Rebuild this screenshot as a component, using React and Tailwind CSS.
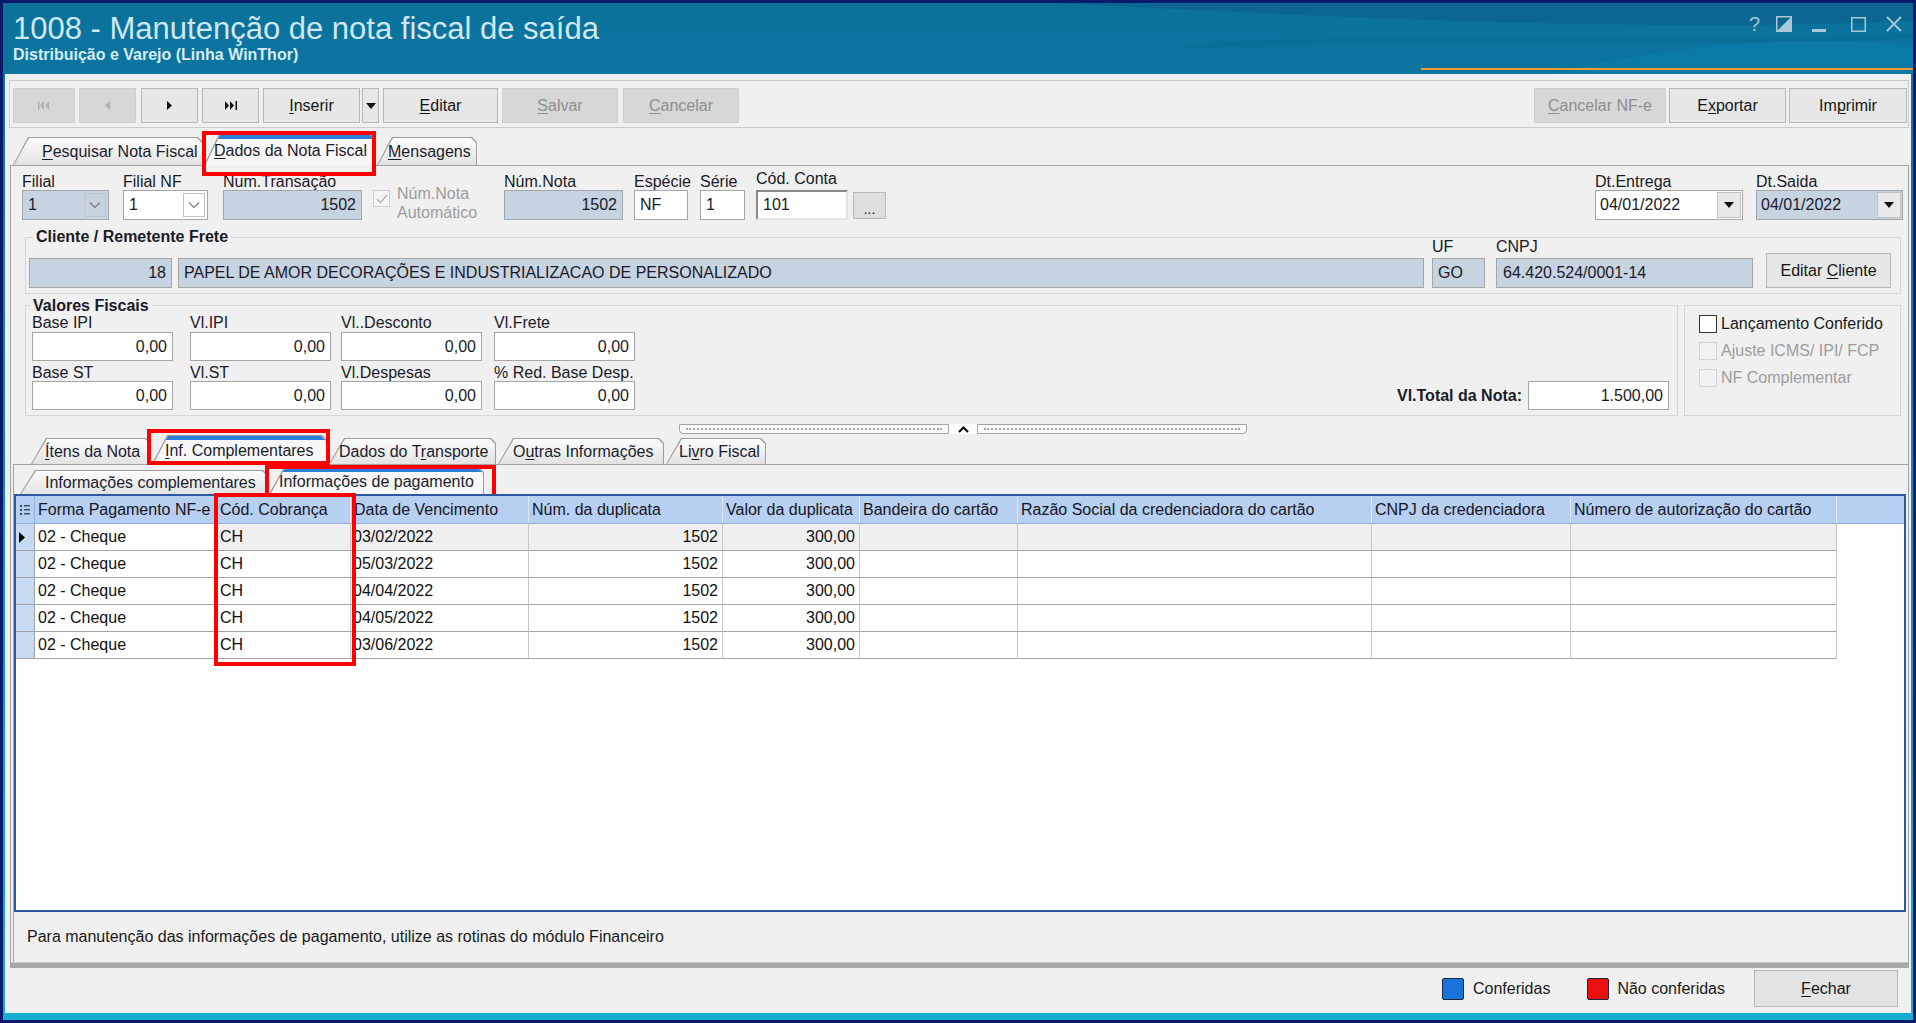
import React from "react";

const U = ({ children }) => (
  <span className="underline decoration-[1px] underline-offset-[2px]">{children}</span>
);

function Btn({ className = "", disabled, children }) {
  return (
    <div
      className={`flex h-[35px] shrink-0 items-center justify-center border text-[16px] ${
        disabled
          ? "border-[#cfcfcf] bg-[#d7d7d7] text-[#8e8e8e]"
          : "border-[#b7b7b7] bg-[#e7e7e7] text-[#161616]"
      } ${className}`}
    >
      <span className="whitespace-pre">{children}</span>
    </div>
  );
}

const CLIP = "[clip-path:polygon(0_100%,15px_0,calc(100%_-_5px)_0,100%_5px,100%_100%)]";

function Tab({ className = "", active, children, textClass = "", ring }) {
  return (
    <div className={`relative shrink-0 ${active ? "h-full" : "h-[calc(100%_-_3px)]"} ${className}`}>
      <div className={`absolute inset-0 bg-[#9d9d9d] ${CLIP}`} />
      <div
        className={`absolute left-[1px] right-[1px] top-[1px] overflow-hidden ${CLIP} ${
          active ? "bottom-[-1px] bg-[#f7f7f7]" : "bottom-0 bg-gradient-to-b from-[#fdfdfd] to-[#e2e2e2]"
        }`}
      >
        {active && <div className="h-[4px] bg-[#2b7fd8]" />}
      </div>
      <div className={`relative flex h-full items-center whitespace-nowrap pt-[2px] text-[16px] text-[#1c1c2e] ${textClass}`}>
        <span className="whitespace-pre">{children}</span>
      </div>
      {ring}
    </div>
  );
}

function Inp({ className = "", ro, right, sunken, children }) {
  return (
    <div
      className={`flex h-full items-center overflow-hidden whitespace-nowrap px-[5px] text-[16px] ${
        sunken ? "border-[2px] border-[#8a8a8a] border-b-[#e3e3e3] border-r-[#e3e3e3]" : "border border-[#a6a6a6]"
      } ${ro ? "bg-[#c6d3e0]" : "bg-white"} ${right ? "justify-end" : ""} ${className}`}
    >
      {children}
    </div>
  );
}

function Field({ label, className = "", lbl = "h-[16px] leading-[16px]", ih = "h-[30px]", children }) {
  return (
    <div className={`flex shrink-0 flex-col ${className}`}>
      <div className={`whitespace-nowrap text-[16px] ${lbl}`}>{label}</div>
      <div className={ih}>{children}</div>
    </div>
  );
}

const Chevron = () => (
  <svg width="12" height="8" viewBox="0 0 12 8">
    <path d="M1 1.5 L6 6.5 L11 1.5" fill="none" stroke="#7b7b7b" strokeWidth="1.2" />
  </svg>
);

const DownTri = () => (
  <svg width="10" height="6" viewBox="0 0 10 6">
    <path d="M0 0 H10 L5 6 Z" fill="#111" />
  </svg>
);

function Combo({ ro, children }) {
  return (
    <div className={`flex h-full border border-[#a6a6a6] ${ro ? "bg-[#c6d3e0]" : "bg-white"}`}>
      <div className="flex flex-1 items-center pl-[5px]">{children}</div>
      <div className="m-[2px] flex w-[22px] items-center justify-center border border-[#c4c4c4]">
        <Chevron />
      </div>
    </div>
  );
}

function DateBox({ ro, children }) {
  return (
    <div className={`flex h-full border border-[#a6a6a6] ${ro ? "bg-[#c6d3e0]" : "bg-white"}`}>
      <div className="flex flex-1 items-center pl-[4px]">{children}</div>
      <div className="my-[1px] mr-[1px] flex w-[24px] items-center justify-center border border-[#c2c2c2] bg-[#e9e9e9]">
        <DownTri />
      </div>
    </div>
  );
}

function CheckItem({ disabled, children }) {
  return (
    <div className="flex h-[27px] items-center">
      <div
        className={`h-[18px] w-[18px] shrink-0 border ${
          disabled ? "border-[#d2d2d2] bg-[#f2f2f2]" : "border-[#333] bg-white"
        }`}
      />
      <span className={`ml-[4px] whitespace-nowrap text-[16px] ${disabled ? "text-[#9c9c9c]" : "text-[#1a1a1a]"}`}>
        {children}
      </span>
    </div>
  );
}

function VField({ label, className = "", lbl }) {
  return (
    <Field label={label} className={`w-[141px] ${className}`} lbl={lbl} ih="h-[29px]">
      <Inp right>0,00</Inp>
    </Field>
  );
}

const COLS = [
  { w: "w-[182px]", h: "Forma Pagamento NF-e" },
  { w: "w-[134px]", h: "Cód. Cobrança" },
  { w: "w-[178px]", h: "Data de Vencimento" },
  { w: "w-[194px]", h: "Núm. da duplicata" },
  { w: "w-[137px]", h: "Valor da duplicata" },
  { w: "w-[158px]", h: "Bandeira do cartão" },
  { w: "w-[354px]", h: "Razão Social da credenciadora do cartão" },
  { w: "w-[199px]", h: "CNPJ da credenciadora" },
  { w: "w-[266px]", h: "Número de autorização do cartão" },
];

const ROWS = [
  ["02 - Cheque", "CH", "03/02/2022", "1502", "300,00"],
  ["02 - Cheque", "CH", "05/03/2022", "1502", "300,00"],
  ["02 - Cheque", "CH", "04/04/2022", "1502", "300,00"],
  ["02 - Cheque", "CH", "04/05/2022", "1502", "300,00"],
  ["02 - Cheque", "CH", "03/06/2022", "1502", "300,00"],
];

function Grid() {
  return (
    <div className="relative mr-[2px] h-[418px] shrink-0 border-2 border-[#2b58a0] bg-white">
      <div className="flex h-[28px] border-b border-[#93b2db] bg-[#b7cff0]">
        <div className="flex w-[19px] shrink-0 items-center justify-center border-r border-[#93b2db]">
          <svg width="10" height="12" viewBox="0 0 10 12">
            <rect x="0" y="1" width="2" height="2" fill="#3a4a66" />
            <rect x="0" y="5" width="2" height="2" fill="#3a4a66" />
            <rect x="0" y="9" width="2" height="2" fill="#3a4a66" />
            <rect x="4" y="1" width="6" height="1.4" fill="#3a4a66" />
            <rect x="4" y="5" width="6" height="1.4" fill="#3a4a66" />
            <rect x="4" y="9" width="6" height="1.4" fill="#3a4a66" />
          </svg>
        </div>
        {COLS.map((c, i) => (
          <div
            key={i}
            className={`${c.w} shrink-0 overflow-hidden whitespace-nowrap border-r border-[#dce7f6] pl-[3px] text-[16px] leading-[27px] text-[#15151f]`}
          >
            {c.h}
          </div>
        ))}
      </div>
      {ROWS.map((r, i) => (
        <div key={i} className="flex h-[27px]">
          <div className="flex w-[19px] shrink-0 items-center border-b border-r border-[#a3a3a3] bg-[#c8daf1] pl-[3px]">
            {i === 0 && (
              <svg width="6" height="11" viewBox="0 0 6 11">
                <path d="M0 0 L6 5.5 L0 11 Z" fill="#000" />
              </svg>
            )}
          </div>
          {COLS.map((c, j) => {
            const v = r[j] || "";
            const right = j === 3 || j === 4;
            const bg = i === 0 && j > 0 ? "bg-[#efefef]" : "bg-white";
            return (
              <div
                key={j}
                className={`${c.w} flex shrink-0 items-center overflow-hidden whitespace-nowrap border-b border-r border-b-[#a3a3a3] border-r-[#c6c6c6] text-[16px] text-[#111] ${bg} ${
                  right ? "justify-end pr-[4px]" : j === 2 ? "pl-[2px]" : "pl-[3px]"
                }`}
              >
                {v}
              </div>
            );
          })}
        </div>
      ))}
      <div className="absolute left-[198px] top-[-3px] h-[173px] w-[142px] border-[4px] border-[#ff0000]" />
    </div>
  );
}

function TitleBar() {
  return (
    <div className="relative flex h-[71px] shrink-0 items-start overflow-hidden">
      <svg className="absolute inset-0 h-full w-full" viewBox="0 0 1910 71" preserveAspectRatio="none">
        <path d="M1050 0 C1300 12 1600 30 1910 18 L1910 0 Z" fill="#0a5c84" opacity="0.45" />
        <path d="M1550 71 C1650 45 1780 30 1910 42 L1910 71 Z" fill="#0b80ad" opacity="0.5" />
        <path d="M1180 40 C1400 30 1650 38 1910 30 L1910 36 C1650 44 1400 38 1180 46 Z" fill="#0a6890" opacity="0.3" />
      </svg>
      <div className="relative pl-[10px] pt-[9px]">
        <div className="whitespace-nowrap text-[31px] leading-[34px] text-[#cfe7f1]">
          1008 - Manutenção de nota fiscal de saída
        </div>
        <div className="whitespace-nowrap text-[16px] font-bold leading-[18px] text-[#d5ecf4]">
          Distribuição e Varejo (Linha WinThor)
        </div>
      </div>
      <div className="relative ml-auto mr-[11px] mt-[11px] flex h-[20px] items-center text-[#a9c7d7]">
        <div className="w-[12px] text-[20px] leading-[20px]">?</div>
        <svg className="ml-[15px]" width="16" height="16" viewBox="0 0 16 16">
          <rect x="0.75" y="0.75" width="14.5" height="14.5" fill="none" stroke="#a9c7d7" strokeWidth="1.5" />
          <path d="M1 15 L15 1 L15 15 Z" fill="#a9c7d7" />
        </svg>
        <svg className="ml-[20px]" width="14" height="16" viewBox="0 0 14 16">
          <rect x="0" y="13" width="14" height="3" fill="#a9c7d7" />
        </svg>
        <svg className="ml-[25px]" width="15" height="15" viewBox="0 0 15 15">
          <rect x="0.75" y="0.75" width="13.5" height="13.5" fill="none" stroke="#a9c7d7" strokeWidth="1.5" />
        </svg>
        <svg className="ml-[20px]" width="16" height="16" viewBox="0 0 16 16">
          <path d="M1 1 L15 15 M15 1 L1 15" stroke="#a9c7d7" strokeWidth="1.8" />
        </svg>
      </div>
      <div className="absolute bottom-[4px] left-[1418px] right-0 h-[2px] bg-[#f29a2e]" />
    </div>
  );
}

function Toolbar() {
  return (
    <div className="ml-[4px] mr-[2px] mt-[6px] flex h-[48px] shrink-0 border border-[#cbcbcb] pl-[3px] pr-[1px] pt-[7px]">
      <Btn disabled className="w-[62px]">
        <svg width="12" height="9" viewBox="0 0 12 9">
          <rect x="0" y="0" width="1.5" height="9" fill="#b2b2b2" />
          <path d="M6 0 L2 4.5 L6 9 Z M11 0 L7 4.5 L11 9 Z" fill="#b2b2b2" />
        </svg>
      </Btn>
      <Btn disabled className="ml-[4px] w-[57px]">
        <svg width="5" height="9" viewBox="0 0 5 9">
          <path d="M5 0 L0 4.5 L5 9 Z" fill="#b2b2b2" />
        </svg>
      </Btn>
      <Btn className="ml-[5px] w-[57px]">
        <svg width="5" height="9" viewBox="0 0 5 9">
          <path d="M0 0 L5 4.5 L0 9 Z" fill="#111" />
        </svg>
      </Btn>
      <Btn className="ml-[4px] w-[57px]">
        <svg width="12" height="9" viewBox="0 0 12 9">
          <path d="M0 0 L4 4.5 L0 9 Z M5 0 L9 4.5 L5 9 Z" fill="#111" />
          <rect x="10.5" y="0" width="1.5" height="9" fill="#111" />
        </svg>
      </Btn>
      <Btn className="ml-[4px] w-[97px]">
        <U>I</U>nserir
      </Btn>
      <Btn className="ml-[2px] w-[17px]">
        <DownTri />
      </Btn>
      <Btn className="ml-[4px] w-[115px]">
        <U>E</U>ditar
      </Btn>
      <Btn disabled className="ml-[4px] w-[116px]">
        <U>S</U>alvar
      </Btn>
      <Btn disabled className="ml-[5px] w-[116px]">
        <U>C</U>ancelar
      </Btn>
      <div className="flex-1" />
      <Btn disabled className="w-[132px]">
        <U>C</U>ancelar NF-e
      </Btn>
      <Btn className="ml-[3px] w-[117px]">
        E<U>x</U>portar
      </Btn>
      <Btn className="ml-[3px] w-[118px]">
        Im<U>p</U>rimir
      </Btn>
    </div>
  );
}

function Page1() {
  return (
    <div className="ml-[5px] mr-[2px] flex shrink-0 flex-col border-x border-t border-[#a3a3a3]">
      {/* Row 1 */}
      <div className="mt-[8px] flex h-[46px] shrink-0 items-end pl-[11px] pr-[5px]">
        <Field label="Filial" className="w-[87px]">
          <Combo ro>1</Combo>
        </Field>
        <Field label="Filial NF" className="ml-[14px] w-[85px]">
          <Combo>1</Combo>
        </Field>
        <Field label="Num.Transação" className="ml-[15px] w-[139px]">
          <Inp ro right>
            1502
          </Inp>
        </Field>
        <div className="ml-[11px] flex h-[36px] w-[124px] shrink-0">
          <div className="mt-[6px] flex h-[17px] w-[17px] shrink-0 items-center justify-center border border-[#cdcdcd] bg-[#f5f5f5]">
            <svg width="12" height="10" viewBox="0 0 12 10">
              <path d="M1 5 L4.5 8.5 L11 1" fill="none" stroke="#b9b9b9" strokeWidth="1.6" />
            </svg>
          </div>
          <div className="ml-[7px] whitespace-nowrap text-[16px] leading-[19px] text-[#9c9c9c]">
            Núm.Nota
            <br />
            Automático
          </div>
        </div>
        <Field label="Núm.Nota" className="ml-[7px] w-[119px]">
          <Inp ro right>
            1502
          </Inp>
        </Field>
        <Field label="Espécie" className="ml-[11px] w-[54px]">
          <Inp className="px-[4px]">NF</Inp>
        </Field>
        <Field label="Série" className="ml-[12px] w-[45px]">
          <Inp className="px-[4px]">1</Inp>
        </Field>
        <Field label="Cód. Conta" className="ml-[11px] w-[92px]" lbl="h-[16px] leading-[10px]">
          <Inp sunken className="px-[3px]">
            101
          </Inp>
        </Field>
        <div className="mb-[1px] ml-[5px] flex h-[27px] w-[33px] shrink-0 items-end justify-center border border-[#b9b9b9] bg-[#dedede] pb-[4px] text-[14px] leading-[10px] text-[#222]">
          ...
        </div>
        <div className="flex-1" />
        <Field label="Dt.Entrega" className="w-[148px]">
          <DateBox>04/01/2022</DateBox>
        </Field>
        <Field label="Dt.Saida" className="ml-[13px] w-[147px]">
          <DateBox ro>04/01/2022</DateBox>
        </Field>
      </div>

      {/* Cliente group */}
      <div className="ml-[14px] mr-[7px] mt-[17px] h-[57px] shrink-0 border border-[#d6d6d6]">
        <div className="flex h-0 items-start">
          <div className="-mt-[11px] ml-[7px] bg-[#f0f0f0] px-[3px] text-[16px] font-bold leading-[20px] text-[#1a1a28]">
            Cliente / Remetente Frete
          </div>
        </div>
        <div className="flex items-end pl-[3px]">
          <div className="h-[30px] w-[143px] shrink-0">
            <Inp ro right>
              18
            </Inp>
          </div>
          <div className="ml-[6px] h-[30px] w-[1246px] shrink-0">
            <Inp ro>PAPEL DE AMOR DECORAÇÕES E INDUSTRIALIZACAO DE PERSONALIZADO</Inp>
          </div>
          <Field label="UF" className="ml-[8px] w-[53px]" lbl="h-[20px] leading-[18px]">
            <Inp ro className="px-[4px]">
              GO
            </Inp>
          </Field>
          <Field label="CNPJ" className="ml-[11px] w-[257px]" lbl="h-[20px] leading-[18px]">
            <Inp ro className="px-[6px]">
              64.420.524/0001-14
            </Inp>
          </Field>
          <Btn className="ml-[13px] w-[125px]">
            Editar <U>C</U>liente
          </Btn>
        </div>
      </div>

      {/* Valores fiscais + checkboxes */}
      <div className="ml-[14px] mr-[7px] mt-[11px] flex h-[111px] shrink-0">
        <div className="flex-1 border border-[#d6d6d6]">
          <div className="flex h-0 items-start">
            <div className="-mt-[10px] ml-[4px] bg-[#f0f0f0] px-[3px] text-[16px] font-bold leading-[20px] text-[#1a1a28]">
              Valores Fiscais
            </div>
          </div>
          <div className="flex pl-[6px] pt-[8px]">
            <VField label="Base IPI" lbl="h-[18px] leading-[18px]" />
            <VField label="Vl.IPI" className="ml-[17px]" lbl="h-[18px] leading-[18px]" />
            <VField label="Vl..Desconto" className="ml-[10px]" lbl="h-[18px] leading-[18px]" />
            <VField label="Vl.Frete" className="ml-[12px]" lbl="h-[18px] leading-[18px]" />
          </div>
          <div className="mt-[3px] flex items-end pl-[6px]">
            <VField label="Base ST" lbl="h-[17px] leading-[17px]" />
            <VField label="Vl.ST" className="ml-[17px]" lbl="h-[17px] leading-[17px]" />
            <VField label="Vl.Despesas" className="ml-[10px]" lbl="h-[17px] leading-[17px]" />
            <VField label="% Red. Base Desp." className="ml-[12px]" lbl="h-[17px] leading-[17px]" />
            <div className="flex-1" />
            <div className="flex h-[29px] items-center pr-[8px]">
              <span className="mr-[6px] whitespace-nowrap text-[16px] font-bold text-[#1a1a28]">Vl.Total da Nota:</span>
              <div className="h-full w-[141px]">
                <Inp right>1.500,00</Inp>
              </div>
            </div>
          </div>
        </div>
        <div className="ml-[6px] w-[217px] shrink-0 border border-[#d6d6d6] pl-[14px] pt-[4px]">
          <CheckItem>Lançamento Conferido</CheckItem>
          <CheckItem disabled>Ajuste ICMS/ IPI/ FCP</CheckItem>
          <CheckItem disabled>NF Complementar</CheckItem>
        </div>
      </div>

      {/* Splitter */}
      <div className="ml-[668px] mt-[8px] flex h-[10px] w-[568px] shrink-0">
        <div className="flex flex-1 items-center rounded-bl-[4px] border border-[#a3a3a3] bg-[#fafafa] px-[6px]">
          <div className="h-0 w-full border-t-2 border-dotted border-[#a7a7a7]" />
        </div>
        <div className="flex w-[28px] shrink-0 items-center justify-center bg-white">
          <svg width="11" height="7" viewBox="0 0 11 7">
            <path d="M1 6 L5.5 1.5 L10 6" fill="none" stroke="#000" strokeWidth="2" />
          </svg>
        </div>
        <div className="flex flex-1 items-center rounded-br-[4px] border border-[#a3a3a3] bg-[#fafafa] px-[6px]">
          <div className="h-0 w-full border-t-2 border-dotted border-[#a7a7a7]" />
        </div>
      </div>

      {/* Tab row 2 */}
      <div className="ml-[20px] mt-[1px] flex h-[29px] shrink-0 items-end">
        <Tab className="w-[120px]" textClass="pl-[14px]">
          <U>Í</U>tens da Nota
        </Tab>
        <Tab
          active
          className="ml-[1px] w-[175px]"
          textClass="pl-[13px]"
          ring={<div className="absolute -bottom-[1px] -left-[5px] -right-[3px] -top-[6px] border-[4px] border-[#ff0000]" />}
        >
          <U>I</U>nf. Complementares
        </Tab>
        <Tab className="ml-[2px] w-[167px]" textClass="pl-[10px]">
          Dados do T<U>r</U>ansporte
        </Tab>
        <Tab className="ml-[2px] w-[166px]" textClass="pl-[15px]">
          O<U>u</U>tras Informações
        </Tab>
        <Tab className="ml-[2px] w-[100px]" textClass="pl-[13px]">
          Li<U>v</U>ro Fiscal
        </Tab>
      </div>

      {/* Page 2 */}
      <div className="ml-[2px] flex shrink-0 flex-col border-l border-t border-[#a3a3a3]">
        <div className="ml-[6px] mt-[2px] flex h-[27px] shrink-0 items-end">
          <Tab className="w-[248px]" textClass="pl-[25px]">
            Informações complementares
          </Tab>
          <Tab
            active
            className="ml-[1px] w-[215px]"
            textClass="pl-[10px]"
            ring={<div className="absolute -bottom-[5px] -left-[4px] -right-[12px] -top-[2px] border-[4px] border-[#ff0000]" />}
          >
            Informações de pagamento
          </Tab>
        </div>
        <Grid />
        <div className="flex h-[50px] shrink-0 items-center pl-[13px] text-[16px] text-[#1a1a1a]">
          Para manutenção das informações de pagamento, utilize as rotinas do módulo Financeiro
        </div>
      </div>
      <div className="h-[6px] shrink-0 border-t border-[#c8c8c8] bg-[#a8a8a8]" />
    </div>
  );
}

function BottomBar() {
  return (
    <div className="flex h-[45px] shrink-0 items-center justify-end pb-[6px] pr-[13px] pt-[2px]">
      <div className="h-[22px] w-[22px] rounded-[2px] border border-[#1b2740] bg-[#1874d9]" />
      <span className="ml-[9px] text-[16px] text-[#1a1a1a]">Conferidas</span>
      <div className="ml-[37px] h-[22px] w-[22px] rounded-[2px] border border-[#1b2740] bg-[#ee0f0f]" />
      <span className="ml-[8px] text-[16px] text-[#1a1a1a]">Não conferidas</span>
      <div className="ml-[29px] flex h-[37px] w-[144px] items-center justify-center border border-[#b7b7b7] bg-[#e3e3e3] text-[16px] text-[#161616]">
        <span>
          <U>F</U>echar
        </span>
      </div>
    </div>
  );
}

export default function App() {
  return (
    <div className="h-[1023px] w-[1916px] overflow-hidden bg-[#0a1a6a] p-[3px] font-['Liberation_Sans',Arial,sans-serif] text-[16px] text-[#1a1a28]">
      <div className="flex h-full flex-col bg-[linear-gradient(180deg,#0b719b_0%,#0e92bb_55%,#15aed2_100%)]">
        <TitleBar />
        <div className="mx-[2px] flex h-[939px] shrink-0 flex-col bg-[#f0f0f0]">
          <Toolbar />
          <div className="ml-[8px] mt-[6px] flex h-[31px] shrink-0 items-end">
            <Tab className="w-[190px]" textClass="pl-[29px]">
              <U>P</U>esquisar Nota Fiscal
            </Tab>
            <Tab
              active
              className="ml-[1px] w-[172px]"
              textClass="pl-[10px]"
              ring={<div className="absolute -bottom-[11px] -left-[2px] -right-[0px] -top-[3px] border-[4px] border-[#ff0000]" />}
            >
              <U>D</U>ados da Nota Fiscal
            </Tab>
            <Tab className="ml-[1px] w-[100px]" textClass="pl-[11px]">
              <U>M</U>ensagens
            </Tab>
          </div>
          <Page1 />
          <BottomBar />
        </div>
      </div>
    </div>
  );
}
